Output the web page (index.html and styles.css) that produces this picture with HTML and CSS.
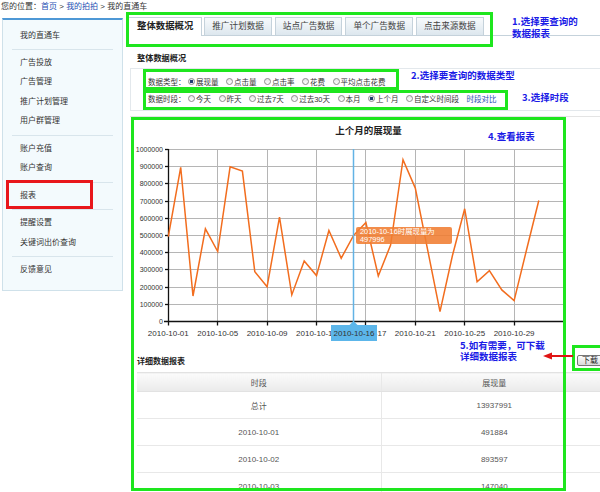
FILE: index.html
```html
<!DOCTYPE html>
<html lang="zh-CN">
<head>
<meta charset="utf-8">
<title>报表 - 我的直通车</title>
<link rel="stylesheet" href="styles.css">
</head>
<body>
<div class="page">
  <div class="crumb">您的位置：<a class="lnk">首页</a> &gt; <a class="lnk">我的拍拍</a> &gt; 我的直通车</div>
  <div class="layout">
    <aside class="side">
      <div class="grp first"><div class="item">我的直通车</div></div>
      <div class="grp">
        <div class="item">广告投放</div>
        <div class="item">广告管理</div>
        <div class="item">推广计划管理</div>
        <div class="item">用户群管理</div>
      </div>
      <div class="grp">
        <div class="item">账户充值</div>
        <div class="item">账户查询</div>
      </div>
      <div class="grp"><div class="item">报表</div></div>
      <div class="grp">
        <div class="item">提醒设置</div>
        <div class="item">关键词出价查询</div>
      </div>
      <div class="grp"><div class="item">反馈意见</div></div>
    </aside>
    <main class="main">
      <div class="tabs">
        <span class="tab active">整体数据概况</span>
        <span class="tab">推广计划数据</span>
        <span class="tab">站点广告数据</span>
        <span class="tab">单个广告数据</span>
        <span class="tab">点击来源数据</span>
      </div>
      <div class="sec-title">整体数据概况</div>
      <div class="filter">
        <div class="frow">
          <span class="flabel">数据类型：</span>
          <span class="opt"><i class="radio on"></i>展现量</span>
          <span class="opt"><i class="radio"></i>点击量</span>
          <span class="opt"><i class="radio"></i>点击率</span>
          <span class="opt"><i class="radio"></i>花费</span>
          <span class="opt"><i class="radio"></i>平均点击花费</span>
        </div>
        <div class="frow">
          <span class="flabel">数据时段：</span>
          <span class="opt"><i class="radio"></i>今天</span>
          <span class="opt"><i class="radio"></i>昨天</span>
          <span class="opt"><i class="radio"></i>过去7天</span>
          <span class="opt"><i class="radio"></i>过去30天</span>
          <span class="opt"><i class="radio"></i>本月</span>
          <span class="opt"><i class="radio on"></i>上个月</span>
          <span class="opt"><i class="radio"></i>自定义时间段</span>
          <a class="lnk cmp">时段对比</a>
        </div>
      </div>
      <div class="chart">
        <div class="chart-title">上个月的展现量</div>
        <svg class="plot" width="440" height="205" viewBox="0 0 440 205">
          <g class="grid">
            <line x1="38.5" y1="164.5" x2="433" y2="164.5"/>
            <line x1="38.5" y1="147.5" x2="433" y2="147.5"/>
            <line x1="38.5" y1="129.5" x2="433" y2="129.5"/>
            <line x1="38.5" y1="112.5" x2="433" y2="112.5"/>
            <line x1="38.5" y1="95.5" x2="433" y2="95.5"/>
            <line x1="38.5" y1="78.5" x2="433" y2="78.5"/>
            <line x1="38.5" y1="61.5" x2="433" y2="61.5"/>
            <line x1="38.5" y1="43.5" x2="433" y2="43.5"/>
            <line x1="38.5" y1="26.5" x2="433" y2="26.5"/>
            <line x1="38.5" y1="9.5" x2="433" y2="9.5"/>
            <line x1="87.5" y1="9.5" x2="87.5" y2="181.5"/>
            <line x1="137.5" y1="9.5" x2="137.5" y2="181.5"/>
            <line x1="186.5" y1="9.5" x2="186.5" y2="181.5"/>
            <line x1="235.5" y1="9.5" x2="235.5" y2="181.5"/>
            <line x1="285.5" y1="9.5" x2="285.5" y2="181.5"/>
            <line x1="334.5" y1="9.5" x2="334.5" y2="181.5"/>
            <line x1="384.5" y1="9.5" x2="384.5" y2="181.5"/>
          </g>
          <g class="axis">
            <line x1="38.5" y1="9" x2="38.5" y2="182"/>
            <line x1="34" y1="181.5" x2="433" y2="181.5"/>
            <line x1="35" y1="164.5" x2="38.5" y2="164.5"/>
            <line x1="35" y1="147.5" x2="38.5" y2="147.5"/>
            <line x1="35" y1="129.5" x2="38.5" y2="129.5"/>
            <line x1="35" y1="112.5" x2="38.5" y2="112.5"/>
            <line x1="35" y1="95.5" x2="38.5" y2="95.5"/>
            <line x1="35" y1="78.5" x2="38.5" y2="78.5"/>
            <line x1="35" y1="61.5" x2="38.5" y2="61.5"/>
            <line x1="35" y1="43.5" x2="38.5" y2="43.5"/>
            <line x1="35" y1="26.5" x2="38.5" y2="26.5"/>
            <line x1="35" y1="9.5" x2="38.5" y2="9.5"/>
            <line x1="38.5" y1="181.5" x2="38.5" y2="185.5"/>
            <line x1="87.5" y1="181.5" x2="87.5" y2="185.5"/>
            <line x1="137.5" y1="181.5" x2="137.5" y2="185.5"/>
            <line x1="186.5" y1="181.5" x2="186.5" y2="185.5"/>
            <line x1="235.5" y1="181.5" x2="235.5" y2="185.5"/>
            <line x1="285.5" y1="181.5" x2="285.5" y2="185.5"/>
            <line x1="334.5" y1="181.5" x2="334.5" y2="185.5"/>
            <line x1="384.5" y1="181.5" x2="384.5" y2="185.5"/>
          </g>
          <g class="ylab">
            <text x="33" y="184">0</text>
            <text x="33" y="167">100000</text>
            <text x="33" y="150">200000</text>
            <text x="33" y="132">300000</text>
            <text x="33" y="115">400000</text>
            <text x="33" y="98">500000</text>
            <text x="33" y="81">600000</text>
            <text x="33" y="64">700000</text>
            <text x="33" y="46">800000</text>
            <text x="33" y="29">900000</text>
            <text x="33" y="12">1000000</text>
          </g>
          <g class="xlab">
            <text x="38.3" y="196">2010-10-01</text>
            <text x="87.7" y="196">2010-10-05</text>
            <text x="137.1" y="196">2010-10-09</text>
            <text x="186.5" y="196">2010-10-13</text>
            <text x="235.9" y="196">2010-10-17</text>
            <text x="285.3" y="196">2010-10-21</text>
            <text x="334.7" y="196">2010-10-25</text>
            <text x="384.1" y="196">2010-10-29</text>
          </g>
          <polyline class="series" points="38.3,96.6 50.7,27.3 63.0,156.0 75.4,88.8 87.7,111.5 100.1,26.8 112.4,31.1 124.8,131.7 137.1,146.7 149.5,77.2 161.8,154.9 174.2,121.0 186.5,135.6 198.9,90.5 211.2,118.2 223.6,95.5 235.9,82.6 248.3,136.0 260.6,105.0 273.0,19.7 285.3,48.1 297.7,110.1 310.0,171.7 322.4,115.8 334.7,68.8 347.1,141.7 359.4,130.6 371.8,149.9 384.1,160.6 396.5,110.0 408.8,60.5"/>
          <line class="cross" x1="223.5" y1="9" x2="223.5" y2="185"/>
          <polygon class="xbox" points="201,185 219.5,185 223.5,181 227.5,185 247,185 247,201 201,201"/>
          <text class="xboxtxt" x="224" y="196">2010-10-16</text>
          <rect class="tip" x="226" y="87" width="96" height="17" rx="2"/>
          <text class="tiptxt" x="230" y="94">2010-10-16时展现量为</text>
          <text class="tiptxt" x="230" y="102">497996</text>
        </svg>
      </div>
      <div class="detail-head">
        <span class="sec-title2">详细数据报表</span>
        <button class="btn" type="button">下载</button>
      </div>
      <table class="tbl">
        <colgroup><col class="c1"><col></colgroup>
        <thead><tr><th>时段</th><th>展现量</th></tr></thead>
        <tbody>
          <tr><td>总计</td><td>13937991</td></tr>
          <tr><td>2010-10-01</td><td>491884</td></tr>
          <tr><td>2010-10-02</td><td>893597</td></tr>
          <tr><td>2010-10-03</td><td>147040</td></tr>
        </tbody>
      </table>
    </main>
  </div>

  <div class="gbox g1"></div>
  <div class="gbox g2"></div>
  <div class="gbox g3"></div>
  <div class="gbox g4"></div>
  <div class="gbox g5"></div>
  <div class="rbox"></div>
  <div class="ann a1">1.选择要查询的<br>数据报表</div>
  <div class="ann a2">2.选择要查询的数据类型</div>
  <div class="ann a3">3.选择时段</div>
  <div class="ann a4">4.查看报表</div>
  <div class="ann a5">5.如有需要，可下载<br>详细数据报表</div>
  <svg class="arrow" width="32" height="12" viewBox="0 0 32 12">
    <line x1="6" y1="6" x2="30" y2="6"/>
    <polygon points="0,6 9,2.5 9,9.5"/>
  </svg>
</div>
</body>
</html>
```

FILE: styles.css
```css
* { box-sizing: border-box; }
html, body { margin: 0; padding: 0; }
body {
  font-family: "Liberation Sans", "Noto Sans CJK SC", sans-serif;
  color: #333;
  background: #fff;
  overflow: hidden;
}
.page { position: relative; width: 600px; height: 492px; overflow: hidden; }

.crumb { height: 14px; line-height: 14px; font-size: 8px; padding-left: 1px; white-space: nowrap; color: #333; }
.lnk { color: #1d4fb3; text-decoration: none; }

.layout { display: flex; align-items: flex-start; }

/* sidebar */
.side {
  width: 121px;
  flex-shrink: 0;
  margin: 4px 0 0 2px;
  background: #f3fafd;
  border: 1px solid #cfe1ea;
  border-top: 2px solid #4e98d6;
  padding-bottom: 6px;
}
.grp { margin: 0 9px; padding: 3px 0 4px 8px; }
.grp + .grp { border-top: 1px solid #d8e5ec; }
.grp.first { padding-top: 6px; padding-bottom: 3px; }
.item { font-size: 8px; line-height: 19.5px; height: 19.5px; color: #333; white-space: nowrap; }

/* main */
.main { width: 480px; flex-shrink: 0; margin-left: 4px; padding-top: 3px; }

.tabs {
  display: flex;
  align-items: flex-end;
  gap: 3px;
  height: 19px;
  margin-left: 1px;
  border-bottom: 1px solid #c5d2db;
}
.tab {
  height: 18px;
  line-height: 16px;
  padding: 0 7px;
  font-size: 8.6px;
  color: #444;
  white-space: nowrap;
  border: 1px solid #c5d2db;
  border-bottom: none;
  background: linear-gradient(#f7fafc, #dde7ee);
}
.tab.active {
  height: 19px;
  margin-bottom: -1px;
  margin-right: -1px;
  padding: 0 8px;
  background: #fff;
  font-size: 9.4px;
  font-weight: bold;
  color: #222;
}

.sec-title { margin: 17px 0 0 10px; font-size: 8.2px; font-weight: bold; line-height: 12px; color: #222; }

.filter { margin: 3px 0 0 3px; border: 1px solid #e3e8ec; padding: 4px 0 3px 17px; }
.frow { display: flex; align-items: center; height: 17px; font-size: 7.5px; white-space: nowrap; color: #333; }
.flabel { margin-right: 2.5px; }
.opt { display: inline-flex; align-items: center; margin-right: 7.5px; }
.radio {
  display: inline-block;
  width: 7px;
  height: 7px;
  margin-right: 1px;
  border: 1px solid #8c8c8c;
  border-radius: 50%;
  background: linear-gradient(#e6e6e6, #fff);
}
.radio.on { background: radial-gradient(circle, #1f3a70 0 1.4px, #e7ecf2 2px); }
.cmp { margin-left: 0; }

/* chart */
.chart { margin: 5px 0 0 3px; border-top: 1px solid #e4e4e4; }
.chart-title { padding-top: 7px; line-height: 14px; text-align: center; font-size: 9.5px; font-weight: bold; color: #222; }
.plot { display: block; margin-top: 2px; }
.grid line { stroke: #b5b5b5; stroke-width: 1; }
.axis line { stroke: #111; stroke-width: 1.3; }
.ylab text { font-family: "Liberation Sans", sans-serif; font-size: 7px; fill: #333; text-anchor: end; }
.xlab text { font-family: "Liberation Sans", sans-serif; font-size: 8px; fill: #333; text-anchor: middle; }
.series { fill: none; stroke: #f26d1e; stroke-width: 1.5; stroke-linejoin: miter; }
.cross { stroke: #62b3e5; stroke-width: 1.5; }
.xbox { fill: #5cb6ea; }
.xboxtxt { font-family: "Liberation Sans", sans-serif; font-size: 8px; fill: #333; text-anchor: middle; }
.tip { fill: #f07d32; fill-opacity: 0.88; }
.tiptxt { font-family: "Liberation Sans", "Noto Sans CJK SC", sans-serif; font-size: 7.4px; fill: #fff; }

/* detail */
.detail-head { display: flex; align-items: center; height: 12px; margin-top: 9px; padding-left: 10px; }
.sec-title2 { font-size: 8px; font-weight: bold; color: #222; }
.btn {
  margin-left: auto;
  margin-right: 4px;
  height: 11px;
  padding: 0 4px;
  font-family: inherit;
  font-size: 8px;
  line-height: 9px;
  color: #222;
  border: 1px solid #777;
  border-radius: 2px;
  background: linear-gradient(#fdfdfd, #d9d9d9);
}

.tbl {
  margin: 6px 0 0 10px;
  width: 470px;
  border-collapse: collapse;
  table-layout: fixed;
  font-size: 8px;
  color: #555;
}
.tbl .c1 { width: 244px; }
.tbl th {
  height: 19px;
  padding: 0;
  font-weight: normal;
  background: linear-gradient(#fbfbfb, #eaeaea);
  border-top: 1px solid #e2e2e2;
  border-bottom: 1px solid #e2e2e2;
}
.tbl td { height: 27px; padding: 0; text-align: center; border-bottom: 1px solid #e8e8e8; }
.tbl th + th, .tbl td + td { border-left: 1px solid #e8e8e8; }

/* annotation overlays */
.gbox { position: absolute; border: 3px solid #1ee61e; }
.g1 { left: 126px; top: 12px; width: 367px; height: 35px; }
.g2 { left: 143px; top: 69px; width: 256px; height: 21px; }
.g3 { left: 143px; top: 90px; width: 365px; height: 20px; }
.g4 { left: 131px; top: 117px; width: 435px; height: 374px; }
.g5 { left: 572px; top: 345px; width: 34px; height: 26px; }
.rbox { position: absolute; left: 6px; top: 180px; width: 87px; height: 29px; border: 3px solid #e8161b; }

.ann {
  position: absolute;
  font-family: "Noto Sans CJK SC", sans-serif;
  font-size: 9.5px;
  font-weight: bold;
  line-height: 12px;
  color: #1a1ae6;
  white-space: nowrap;
}
.a1 { left: 512px; top: 15px; }
.a2 { left: 411px; top: 69px; }
.a3 { left: 522px; top: 91px; }
.a4 { left: 488px; top: 130px; }
.a5 { left: 460px; top: 340px; line-height: 11px; }

.arrow { position: absolute; left: 543px; top: 350px; }
.arrow line { stroke: #e01414; stroke-width: 2; }
.arrow polygon { fill: #e01414; }
```
